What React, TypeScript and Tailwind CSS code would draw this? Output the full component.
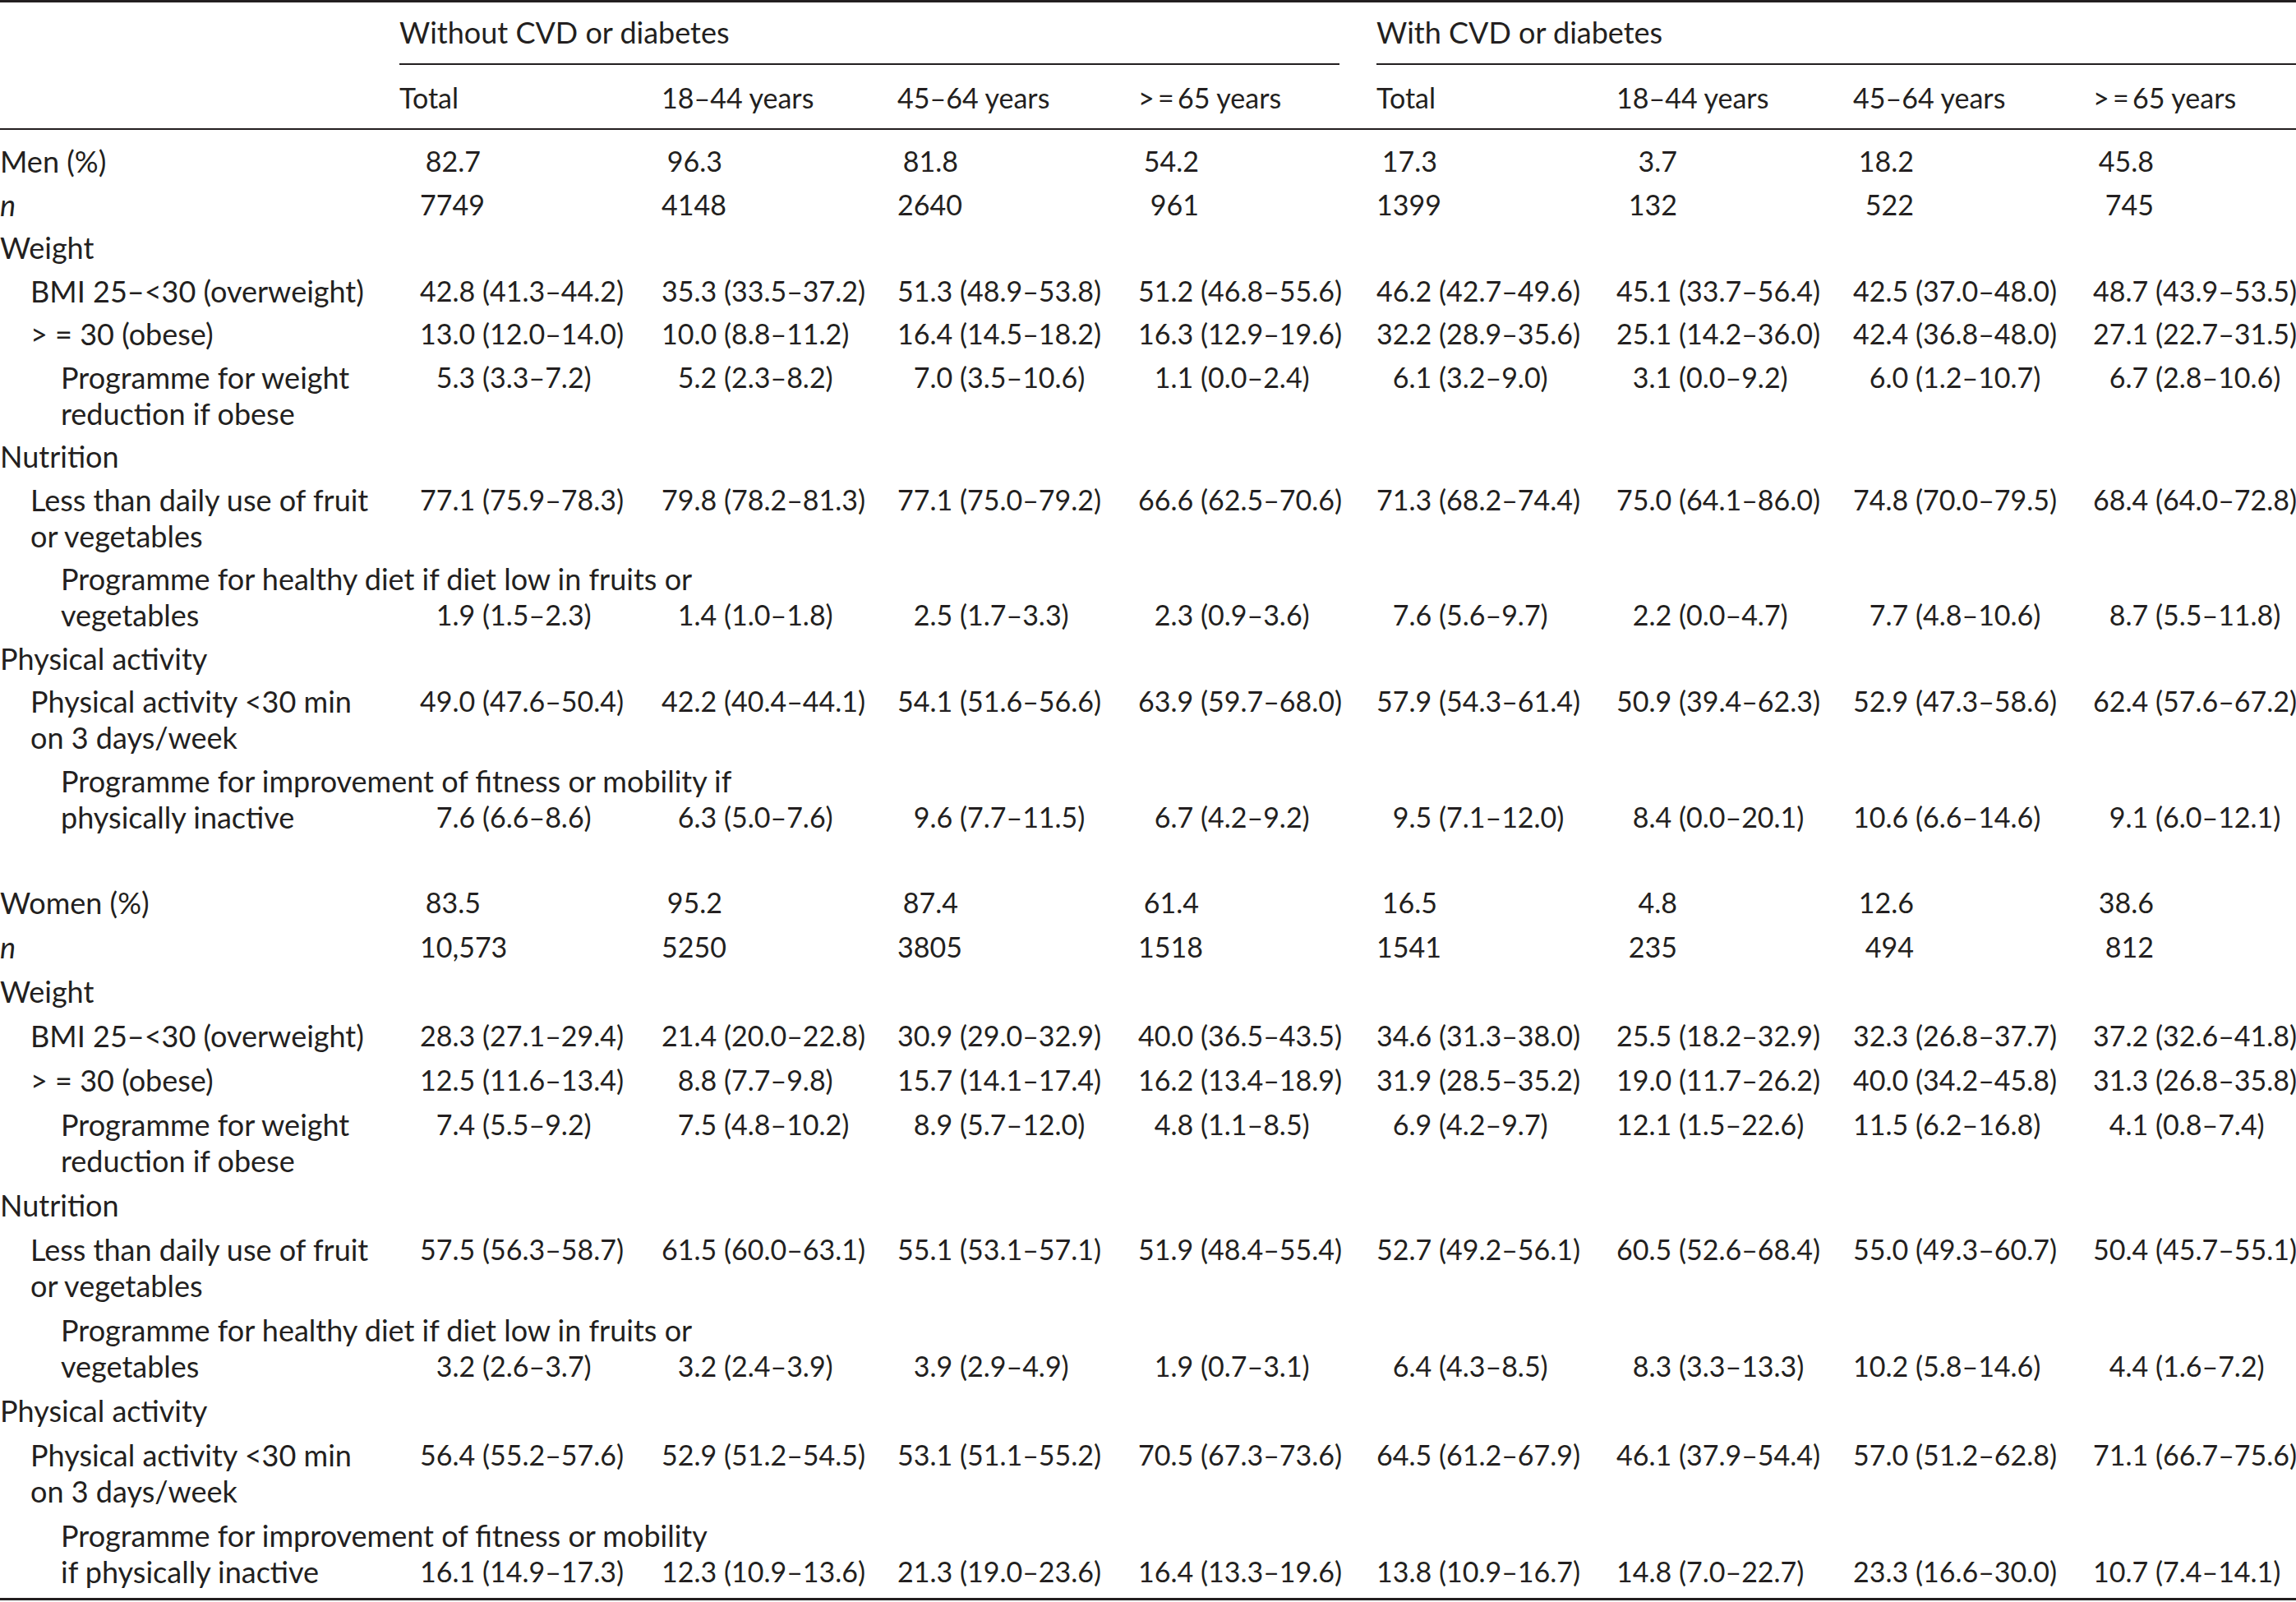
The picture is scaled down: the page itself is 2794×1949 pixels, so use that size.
import React from "react";

const COLS =
  "grid grid-cols-[486px_319px_287px_293px_290px_292px_288px_292px_247px]";

type Row =
  | { kind: "pct"; label: string; values: string[] }
  | { kind: "n"; values: string[] }
  | { kind: "head"; label: string }
  | { kind: "data"; level: 1 | 2; lines: string[]; valueLine: 1 | 2; values: string[] };

const men: Row[] = [
  { kind: "pct", label: "Men (%)", values: ["82.7", "96.3", "81.8", "54.2", "17.3", "3.7", "18.2", "45.8"] },
  { kind: "n", values: ["7749", "4148", "2640", "961", "1399", "132", "522", "745"] },
  { kind: "head", label: "Weight" },
  {
    kind: "data", level: 1, lines: ["BMI 25–<30 (overweight)"], valueLine: 1,
    values: ["42.8 (41.3–44.2)", "35.3 (33.5–37.2)", "51.3 (48.9–53.8)", "51.2 (46.8–55.6)", "46.2 (42.7–49.6)", "45.1 (33.7–56.4)", "42.5 (37.0–48.0)", "48.7 (43.9–53.5)"],
  },
  {
    kind: "data", level: 1, lines: ["> = 30 (obese)"], valueLine: 1,
    values: ["13.0 (12.0–14.0)", "10.0 (8.8–11.2)", "16.4 (14.5–18.2)", "16.3 (12.9–19.6)", "32.2 (28.9–35.6)", "25.1 (14.2–36.0)", "42.4 (36.8–48.0)", "27.1 (22.7–31.5)"],
  },
  {
    kind: "data", level: 2, lines: ["Programme for weight", "reduction if obese"], valueLine: 1,
    values: ["5.3 (3.3–7.2)", "5.2 (2.3–8.2)", "7.0 (3.5–10.6)", "1.1 (0.0–2.4)", "6.1 (3.2–9.0)", "3.1 (0.0–9.2)", "6.0 (1.2–10.7)", "6.7 (2.8–10.6)"],
  },
  { kind: "head", label: "Nutrition" },
  {
    kind: "data", level: 1, lines: ["Less than daily use of fruit", "or vegetables"], valueLine: 1,
    values: ["77.1 (75.9–78.3)", "79.8 (78.2–81.3)", "77.1 (75.0–79.2)", "66.6 (62.5–70.6)", "71.3 (68.2–74.4)", "75.0 (64.1–86.0)", "74.8 (70.0–79.5)", "68.4 (64.0–72.8)"],
  },
  {
    kind: "data", level: 2, lines: ["Programme for healthy diet if diet low in fruits or", "vegetables"], valueLine: 2,
    values: ["1.9 (1.5–2.3)", "1.4 (1.0–1.8)", "2.5 (1.7–3.3)", "2.3 (0.9–3.6)", "7.6 (5.6–9.7)", "2.2 (0.0–4.7)", "7.7 (4.8–10.6)", "8.7 (5.5–11.8)"],
  },
  { kind: "head", label: "Physical activity" },
  {
    kind: "data", level: 1, lines: ["Physical activity <30 min", "on 3 days/week"], valueLine: 1,
    values: ["49.0 (47.6–50.4)", "42.2 (40.4–44.1)", "54.1 (51.6–56.6)", "63.9 (59.7–68.0)", "57.9 (54.3–61.4)", "50.9 (39.4–62.3)", "52.9 (47.3–58.6)", "62.4 (57.6–67.2)"],
  },
  {
    kind: "data", level: 2, lines: ["Programme for improvement of fitness or mobility if", "physically inactive"], valueLine: 2,
    values: ["7.6 (6.6–8.6)", "6.3 (5.0–7.6)", "9.6 (7.7–11.5)", "6.7 (4.2–9.2)", "9.5 (7.1–12.0)", "8.4 (0.0–20.1)", "10.6 (6.6–14.6)", "9.1 (6.0–12.1)"],
  },
];

const women: Row[] = [
  { kind: "pct", label: "Women (%)", values: ["83.5", "95.2", "87.4", "61.4", "16.5", "4.8", "12.6", "38.6"] },
  { kind: "n", values: ["10,573", "5250", "3805", "1518", "1541", "235", "494", "812"] },
  { kind: "head", label: "Weight" },
  {
    kind: "data", level: 1, lines: ["BMI 25–<30 (overweight)"], valueLine: 1,
    values: ["28.3 (27.1–29.4)", "21.4 (20.0–22.8)", "30.9 (29.0–32.9)", "40.0 (36.5–43.5)", "34.6 (31.3–38.0)", "25.5 (18.2–32.9)", "32.3 (26.8–37.7)", "37.2 (32.6–41.8)"],
  },
  {
    kind: "data", level: 1, lines: ["> = 30 (obese)"], valueLine: 1,
    values: ["12.5 (11.6–13.4)", "8.8 (7.7–9.8)", "15.7 (14.1–17.4)", "16.2 (13.4–18.9)", "31.9 (28.5–35.2)", "19.0 (11.7–26.2)", "40.0 (34.2–45.8)", "31.3 (26.8–35.8)"],
  },
  {
    kind: "data", level: 2, lines: ["Programme for weight", "reduction if obese"], valueLine: 1,
    values: ["7.4 (5.5–9.2)", "7.5 (4.8–10.2)", "8.9 (5.7–12.0)", "4.8 (1.1–8.5)", "6.9 (4.2–9.7)", "12.1 (1.5–22.6)", "11.5 (6.2–16.8)", "4.1 (0.8–7.4)"],
  },
  { kind: "head", label: "Nutrition" },
  {
    kind: "data", level: 1, lines: ["Less than daily use of fruit", "or vegetables"], valueLine: 1,
    values: ["57.5 (56.3–58.7)", "61.5 (60.0–63.1)", "55.1 (53.1–57.1)", "51.9 (48.4–55.4)", "52.7 (49.2–56.1)", "60.5 (52.6–68.4)", "55.0 (49.3–60.7)", "50.4 (45.7–55.1)"],
  },
  {
    kind: "data", level: 2, lines: ["Programme for healthy diet if diet low in fruits or", "vegetables"], valueLine: 2,
    values: ["3.2 (2.6–3.7)", "3.2 (2.4–3.9)", "3.9 (2.9–4.9)", "1.9 (0.7–3.1)", "6.4 (4.3–8.5)", "8.3 (3.3–13.3)", "10.2 (5.8–14.6)", "4.4 (1.6–7.2)"],
  },
  { kind: "head", label: "Physical activity" },
  {
    kind: "data", level: 1, lines: ["Physical activity <30 min", "on 3 days/week"], valueLine: 1,
    values: ["56.4 (55.2–57.6)", "52.9 (51.2–54.5)", "53.1 (51.1–55.2)", "70.5 (67.3–73.6)", "64.5 (61.2–67.9)", "46.1 (37.9–54.4)", "57.0 (51.2–62.8)", "71.1 (66.7–75.6)"],
  },
  {
    kind: "data", level: 2, lines: ["Programme for improvement of fitness or mobility", "if physically inactive"], valueLine: 2,
    values: ["16.1 (14.9–17.3)", "12.3 (10.9–13.6)", "21.3 (19.0–23.6)", "16.4 (13.3–19.6)", "13.8 (10.9–16.7)", "14.8 (7.0–22.7)", "23.3 (16.6–30.0)", "10.7 (7.4–14.1)"],
  },
];

function CiValue({ v, first, line2 }: { v: string; first: boolean; line2: boolean }) {
  const i = v.indexOf(".");
  const intPart = v.slice(0, i);
  const rest = v.slice(i);
  return (
    <div className={(first ? "pl-[25px] " : "") + (line2 ? "pt-[44px] " : "") + "whitespace-nowrap"}>
      <span className="inline-block w-[2ch] text-right">{intPart}</span>
      {rest}
    </div>
  );
}

function PlainValue({ v, first }: { v: string; first: boolean }) {
  return (
    <div className={first ? "pl-[25px] whitespace-nowrap" : "whitespace-nowrap"}>
      <span className="inline-block w-[74px] text-right">{v}</span>
    </div>
  );
}

function TableRow({ row, pad }: { row: Row; pad: string }) {
  if (row.kind === "head") {
    return (
      <div className={COLS + " " + pad}>
        <div className="whitespace-nowrap text-[36px]">{row.label}</div>
      </div>
    );
  }
  if (row.kind === "pct" || row.kind === "n") {
    return (
      <div className={COLS + " " + pad}>
        <div className="whitespace-nowrap text-[36px]">
          {row.kind === "pct" ? row.label : <span className="italic">n</span>}
        </div>
        {row.values.map((v, k) => (
          <PlainValue key={k} v={v} first={k === 0} />
        ))}
      </div>
    );
  }
  return (
    <div className={COLS + " " + pad}>
      <div className={(row.level === 1 ? "pl-[37px]" : "pl-[74px]") + " whitespace-nowrap text-[36px]"}>
        {row.lines.map((l, k) => (
          <div key={k}>{l}</div>
        ))}
      </div>
      {row.values.map((v, k) => (
        <CiValue key={k} v={v} first={k === 0} line2={row.valueLine === 2} />
      ))}
    </div>
  );
}

export default function App() {
  const sub = ["Total", "18–44 years", "45–64 years", ">\u2009=\u200965 years"];
  return (
    <div className="min-h-[1949px] w-[2794px] bg-white text-[#231f20] font-['Lato','Open_Sans',sans-serif] text-[34px] leading-[44px]">
      <div className="border-t-[3px] border-b-[3px] border-[#231f20]">
        <div className={COLS + " text-[36px]"}>
          <div />
          <div className="col-span-4 pt-[14px]">
            <div className="mr-[45px] border-b-2 border-[#231f20] pb-[16px] whitespace-nowrap">
              Without CVD or diabetes
            </div>
          </div>
          <div className="col-span-4 pt-[14px]">
            <div className="border-b-2 border-[#231f20] pb-[16px] whitespace-nowrap">
              With CVD or diabetes
            </div>
          </div>
        </div>
        <div className={COLS + " pt-[18px] pb-[15px] border-b-2 border-[#231f20]"}>
          <div />
          {[...sub, ...sub].map((s, k) => (
            <div key={k} className="whitespace-nowrap">
              {s}
            </div>
          ))}
        </div>
        <div className="pt-[12px] pb-[5px]">
          {men.map((r, k) => (
            <TableRow key={"m" + k} row={r} pad="py-[4.25px]" />
          ))}
          <div className="h-[51px]" />
          {women.map((r, k) => (
            <TableRow key={"w" + k} row={r} pad="py-[5px]" />
          ))}
        </div>
      </div>
    </div>
  );
}
